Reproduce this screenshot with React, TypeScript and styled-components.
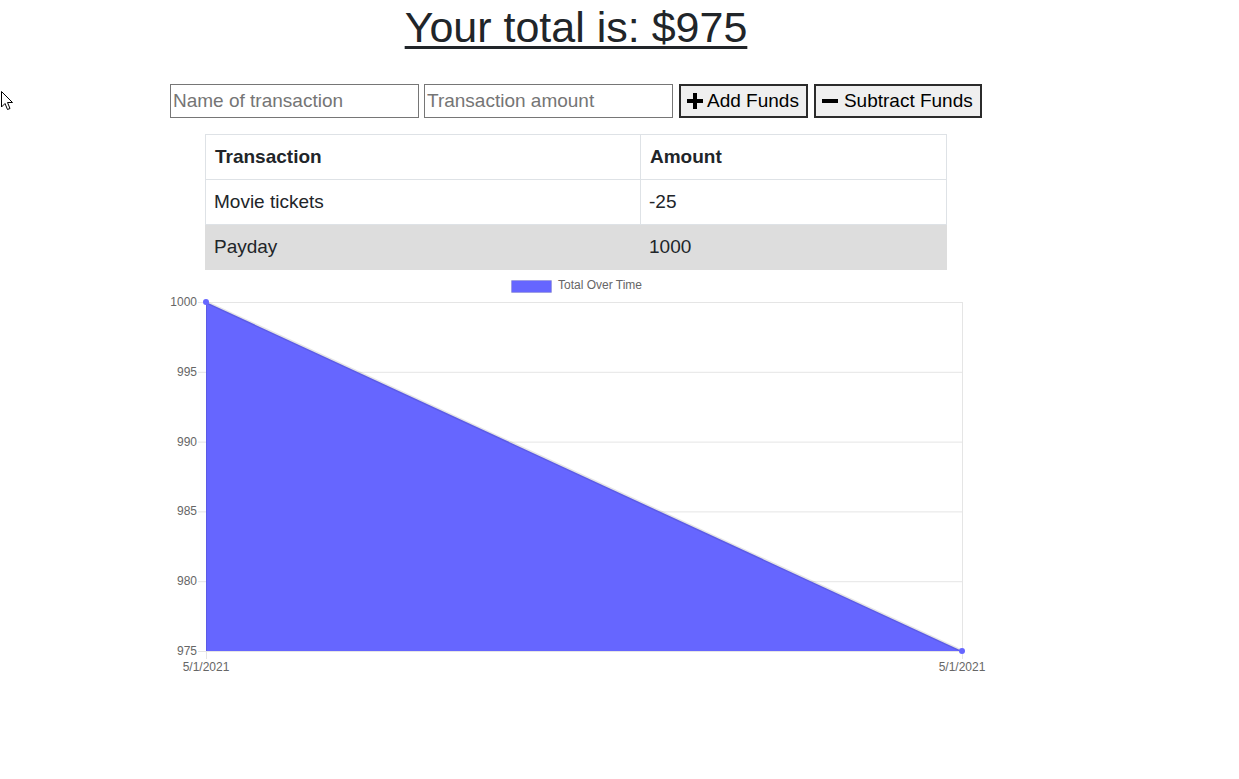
import React from "react";
import styled, { createGlobalStyle } from "styled-components";

const Global = createGlobalStyle`
  html, body { margin: 0; padding: 0; background: #fff; }
  body { font-family: "Liberation Sans", Arial, sans-serif; color: #212529; }
`;

const Page = styled.div`
  width: 812px;
  margin-left: 170px;
  display: flex;
  flex-direction: column;
`;

const Title = styled.h1`
  margin: 3px 0 0;
  font-size: 43px;
  font-weight: 400;
  line-height: 48px;
  text-align: center;
  color: #212529;
  text-decoration: underline;
  text-decoration-thickness: 3px;
  text-underline-offset: 4px;
`;

const Form = styled.div`
  display: flex;
  gap: 5px;
  margin-top: 33px;
  align-items: center;
`;

const Input = styled.input`
  box-sizing: border-box;
  width: 249px;
  height: 34px;
  padding: 1px 2px;
  border: 1px solid #767676;
  border-radius: 0;
  font-family: "Liberation Sans", Arial, sans-serif;
  font-size: 19px;
  &::placeholder { color: #757575; }
`;

const Button = styled.button<{ $ml?: number; $gap?: number }>`
  box-sizing: border-box;
  height: 34px;
  margin-left: ${(p) => p.$ml ?? 0}px;
  padding: 0 7px 0 6px;
  display: flex;
  align-items: center;
  gap: ${(p) => p.$gap ?? 4}px;
  background: #efefef;
  border: 2px solid #2b2b2b;
  border-radius: 0;
  font-family: "Liberation Sans", Arial, sans-serif;
  font-size: 19px;
  color: #000;
`;

const Table = styled.table`
  margin: 16px 0 0 35px;
  width: 742px;
  border-collapse: collapse;
  font-size: 19px;
  color: #212529;
`;

const Cell = styled.td<{ $head?: boolean; $w?: number }>`
  height: 45px;
  box-sizing: border-box;
  padding: 0 ${(p) => (p.$head ? 9 : 8)}px;
  border: 1px solid #dee2e6;
  font-weight: ${(p) => (p.$head ? 700 : 400)};
  width: ${(p) => (p.$w ? `${p.$w}px` : "auto")};
`;

const Row = styled.tr<{ $shade?: boolean }>`
  background: ${(p) => (p.$shade ? "#dddddd" : "#fff")};
  & > td { border-color: ${(p) => (p.$shade ? "#dddddd" : "#dee2e6")}; }
`;

const ChartWrap = styled.div`
  margin-top: 5px;
  width: 820px;
  height: 410px;
`;

const Cursor = styled.svg`
  position: absolute;
  left: 1px;
  top: 91px;
`;

const PlusIcon = () => (
  <svg width="16" height="16" viewBox="0 0 16 16">
    <rect x="6" y="0" width="4" height="16" fill="#000" />
    <rect x="0" y="6" width="16" height="4" fill="#000" />
  </svg>
);

const MinusIcon = () => (
  <svg width="16" height="16" viewBox="0 0 16 16">
    <rect x="0" y="6" width="16" height="4" fill="#000" />
  </svg>
);

const grid = [27, 96.8, 166.6, 236.4, 306.2, 376];
const labels = ["1000", "995", "990", "985", "980", "975"];

const Chart = () => (
  <svg width="820" height="410" viewBox="0 0 820 410" fontFamily="'Liberation Sans', Arial, sans-serif">
    <rect x="341.5" y="5.5" width="40" height="12" fill="#6666ff" stroke="rgba(0,0,0,0.1)" />
    <text x="388" y="14" fontSize="12" fill="#666">Total Over Time</text>
    {grid.map((y, i) => (
      <g key={i}>
        <line x1="28" x2="792" y1={y + 0.5} y2={y + 0.5} stroke="#e5e5e5" />
        <text x="27" y={y + 4} fontSize="12" fill="#666" textAnchor="end">{labels[i]}</text>
      </g>
    ))}
    <line x1="36.5" x2="36.5" y1="27" y2="384" stroke="#e5e5e5" />
    <line x1="792.5" x2="792.5" y1="27" y2="384" stroke="#e5e5e5" />
    <polygon points="36,27 792,376 36,376" fill="#6666ff" />
    <line x1="36" y1="27" x2="792" y2="376" stroke="rgba(0,0,0,0.1)" strokeWidth="3" />
    <line x1="36.5" x2="36.5" y1="27" y2="376" stroke="rgba(0,0,0,0.1)" />
    <circle cx="36" cy="27" r="3" fill="#6666ff" />
    <circle cx="792" cy="376" r="3" fill="#6666ff" />
    <text x="36" y="396" fontSize="12" fill="#666" textAnchor="middle">5/1/2021</text>
    <text x="792" y="396" fontSize="12" fill="#666" textAnchor="middle">5/1/2021</text>
  </svg>
);

export default function App() {
  return (
    <>
      <Global />
      <Cursor width="13" height="20" viewBox="0 0 13 20">
        <path d="M0.5 0.5 L0.5 16 L4 12.5 L6.5 18.5 L9 17.5 L6.5 11.5 L11.5 11.5 Z" fill="#fff" stroke="#000" strokeWidth="1" />
      </Cursor>
      <Page>
        <Title>Your total is: $975</Title>
        <Form>
          <Input placeholder="Name of transaction" />
          <Input placeholder="Transaction amount" />
          <Button $ml={1}>
            <PlusIcon />
            Add Funds
          </Button>
          <Button $ml={1} $gap={6}>
            <MinusIcon />
            Subtract Funds
          </Button>
        </Form>
        <Table>
          <tbody>
            <Row>
              <Cell $head $w={435}>Transaction</Cell>
              <Cell $head>Amount</Cell>
            </Row>
            <Row>
              <Cell>Movie tickets</Cell>
              <Cell>-25</Cell>
            </Row>
            <Row $shade>
              <Cell>Payday</Cell>
              <Cell>1000</Cell>
            </Row>
          </tbody>
        </Table>
        <ChartWrap>
          <Chart />
        </ChartWrap>
      </Page>
    </>
  );
}
